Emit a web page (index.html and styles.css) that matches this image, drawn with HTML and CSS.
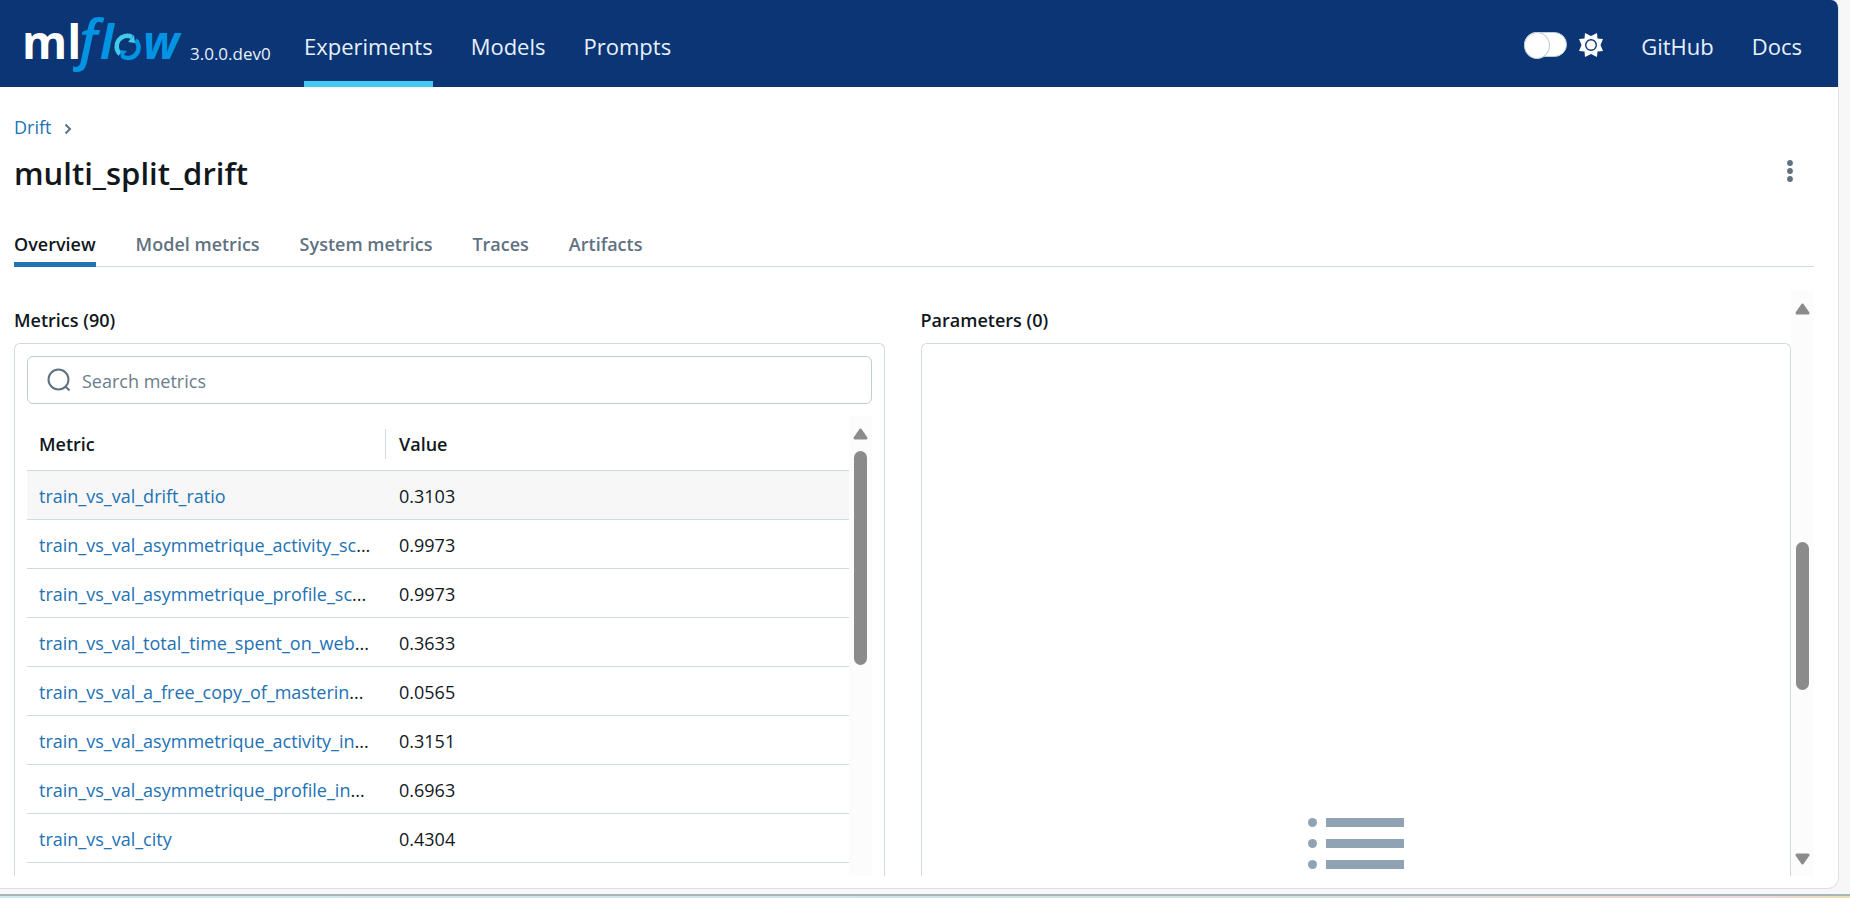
FILE: index.html
```html
<!DOCTYPE html>
<html lang="en">
<head>
<meta charset="utf-8">
<title>multi_split_drift - MLflow</title>
<link rel="stylesheet" href="styles.css">
</head>
<body>
<div class="window">
  <header class="topbar">
    <a class="brand" href="#" aria-label="MLflow home">
      <svg class="logo" viewBox="0 0 160 66" width="160" height="66">
        <text class="logo-ml" x="0" y="52">ml</text>
        <text class="logo-f" x="57" y="52">f</text>
        <text class="logo-l" x="78" y="52">l</text>
        <g fill="none" stroke-width="4.500">
          <path stroke="#43c9ed" d="M98 47 A10.500 10.500 0 0 1 110 30"/>
          <path stroke="#0194e2" d="M113.500 33 A10.500 10.500 0 0 1 100 49"/>
        </g>
        <path fill="#43c9ed" d="M106 35 L113 36 L112 28 Z"/>
        <path fill="#0194e2" d="M105 44 L98 43 L99 51 Z"/>
        <text class="logo-w" x="121" y="52">w</text>
      </svg>
      <span class="version">3.0.0.dev0</span>
    </a>
    <nav class="nav">
      <a class="nav-link active" href="#">Experiments</a>
      <a class="nav-link" href="#">Models</a>
      <a class="nav-link" href="#">Prompts</a>
    </nav>
    <div class="theme">
      <input class="switch" type="checkbox" role="switch" aria-label="Dark mode">
      <svg width="24" height="24" viewBox="0 0 24 24">
        <path fill="#fff" fill-rule="evenodd" d="M6 0 L12 3 L18 0 L18.500 5.500 L24 6 L21.500 12 L24 18 L18.500 18.500 L18 24 L12 21 L6 24 L5.500 18.500 L0 18 L2.500 12 L0 6 L5.500 5.500 Z M12 6 A6 6 0 1 0 12 18 A6 6 0 1 0 12 6 Z"/>
        <circle cx="12" cy="12" r="4.600" fill="#fff"/>
      </svg>
    </div>
    <nav class="nav">
      <a class="nav-link" href="#">GitHub</a>
      <a class="nav-link" href="#">Docs</a>
    </nav>
  </header>

  <main class="page">
    <nav class="crumbs">
      <a class="link" href="#">Drift</a>
      <svg width="8" height="12" viewBox="0 0 8 12"><path d="M1.500 1.500 L6 6 L1.500 10.500" fill="none" stroke="#5f7281" stroke-width="2"/></svg>
    </nav>
    <div class="title-row">
      <h1 class="title">multi_split_drift</h1>
      <button class="more" type="button" aria-label="More actions">
        <svg width="6" height="22" viewBox="0 0 6 22" fill="#5f7281"><circle cx="3" cy="3" r="2.900"/><circle cx="3" cy="11" r="2.900"/><circle cx="3" cy="19" r="2.900"/></svg>
      </button>
    </div>
    <div class="tabs" role="tablist">
      <button class="tab selected" role="tab" type="button">Overview</button>
      <button class="tab" role="tab" type="button">Model metrics</button>
      <button class="tab" role="tab" type="button">System metrics</button>
      <button class="tab" role="tab" type="button">Traces</button>
      <button class="tab" role="tab" type="button">Artifacts</button>
    </div>

    <div class="scroller">
      <div class="columns">
        <section class="column">
          <h2 class="heading">Metrics (90)</h2>
          <div class="card">
            <label class="search">
              <svg width="24" height="24" viewBox="0 0 24 24" fill="none" stroke="#5f7281" stroke-width="2"><circle cx="11.500" cy="11.500" r="10"/><path d="M18.500 18.500 L22.500 22.500"/></svg>
              <input class="search-input" type="text" placeholder="Search metrics" aria-label="Search metrics">
            </label>
            <div class="table-area">
              <table class="table">
                <thead>
                  <tr><th class="name"><span class="th-label">Metric</span></th><th>Value</th></tr>
                </thead>
                <tbody>
                  <tr class="hovered"><td class="name"><a class="link" href="#">train_vs_val_drift_ratio</a></td><td>0.3103</td></tr>
                  <tr><td class="name"><a class="link" href="#">train_vs_val_asymmetrique_activity_sc</a>...</td><td>0.9973</td></tr>
                  <tr><td class="name"><a class="link" href="#">train_vs_val_asymmetrique_profile_sc</a>...</td><td>0.9973</td></tr>
                  <tr><td class="name"><a class="link" href="#">train_vs_val_total_time_spent_on_web</a>...</td><td>0.3633</td></tr>
                  <tr><td class="name"><a class="link" href="#">train_vs_val_a_free_copy_of_masterin</a>...</td><td>0.0565</td></tr>
                  <tr><td class="name"><a class="link" href="#">train_vs_val_asymmetrique_activity_in</a>...</td><td>0.3151</td></tr>
                  <tr><td class="name"><a class="link" href="#">train_vs_val_asymmetrique_profile_in</a>...</td><td>0.6963</td></tr>
                  <tr><td class="name"><a class="link" href="#">train_vs_val_city</a></td><td>0.4304</td></tr>
                </tbody>
              </table>
              <div class="scrollbar table-bar">
                <svg class="arrow" width="15" height="12" viewBox="0 0 15 12"><path d="M7.500 2 L13 10 H2 Z"/></svg>
                <div class="thumb"></div>
              </div>
            </div>
          </div>
        </section>
        <section class="column">
          <h2 class="heading">Parameters (0)</h2>
          <div class="card empty">
            <svg width="96" height="51" viewBox="0 0 96 51" fill="#90a3b4">
              <ellipse cx="4.500" cy="4.500" rx="4.500" ry="4.500"/><rect x="18" width="78" height="9"/>
              <ellipse cx="4.500" cy="25.500" rx="4.500" ry="4.500"/><rect x="18" y="21" width="78" height="9"/>
              <ellipse cx="4.500" cy="46.500" rx="4.500" ry="4.500"/><rect x="18" y="42" width="78" height="9"/>
            </svg>
          </div>
        </section>
      </div>
      <div class="scrollbar page-bar">
        <svg class="arrow" width="15" height="12" viewBox="0 0 15 12"><path d="M7.500 2 L13 10 H2 Z"/></svg>
        <div class="thumb"></div>
        <svg class="arrow down" width="15" height="12" viewBox="0 0 15 12"><path d="M7.500 10 L13 2 H2 Z"/></svg>
      </div>
    </div>
  </main>
</div>
<div class="desktop-edge"></div>
</body>
</html>
```
FILE: styles.css
```css
* {
  box-sizing: border-box;
}

body {
  margin: 0;
  height: 100vh;
  display: flex;
  flex-direction: column;
  overflow: hidden;
  background: #f7f7f7;
  color: #11171c;
  font-family: "Open Sans", "Noto Sans", sans-serif;
  font-size: 18px;
  line-height: 24px;
}

button,
input {
  font: inherit;
}

.window {
  flex: 1;
  min-height: 0;
  display: flex;
  flex-direction: column;
  margin: 0 11px 5px 0;
  overflow: hidden;
  background: #fff;
  border-right: 1px solid #e3e3e3;
  border-bottom: 1px solid #dedede;
  border-radius: 0 8px 12px 0;
}

.topbar {
  flex: none;
  display: flex;
  align-items: stretch;
  height: 87px;
  padding: 0 36px 0 22px;
  background: #0b3574;
}

.brand {
  display: flex;
  align-items: flex-start;
  gap: 8px;
  width: 282px;
  padding-top: 7px;
  color: #e7f1fb;
  text-decoration: none;
}

.logo {
  flex: none;
  overflow: visible;
}

.version {
  padding-top: 35px;
  font-size: 17px;
}

.logo-ml {
  font-size: 46px;
  font-weight: 700;
  fill: #fff;
}

.logo-f {
  font-size: 55px;
  font-style: italic;
  font-weight: 600;
  fill: #0194e2;
}

.logo-l,
.logo-w {
  font-size: 46px;
  font-style: italic;
  font-weight: 700;
  fill: #0194e2;
}

.nav {
  display: flex;
  gap: 38px;
}

.nav-link {
  display: flex;
  align-items: center;
  padding-top: 10px;
  border-bottom: 6px solid transparent;
  color: #e7f1fb;
  font-size: 22px;
  line-height: 28px;
  text-decoration: none;
}

.nav-link.active {
  border-bottom-color: #43c9ed;
}

.theme {
  display: flex;
  align-items: center;
  gap: 12px;
  margin: 0 38px 0 auto;
}

.theme svg {
  margin-top: 3px;
}

.switch {
  appearance: none;
  width: 43px;
  height: 25px;
  margin: 2px 0 0;
  border: 1px solid #c0cdd8;
  border-radius: 13px;
  background: #fff;
}

.switch::before {
  content: "";
  display: block;
  width: 24px;
  height: 25px;
  margin: -1px;
  border: 1px solid #c0cdd8;
  border-radius: 50%;
  background: #fff;
}

.page {
  flex: 1;
  min-height: 0;
  display: flex;
  flex-direction: column;
  padding: 28px 24px 12px 14px;
}

.link {
  color: #2272b4;
  text-decoration: none;
}

.crumbs {
  display: flex;
  align-items: center;
  gap: 13px;
}

.crumbs svg {
  margin-top: 4px;
}

.title-row {
  display: flex;
  align-items: center;
  justify-content: space-between;
  padding: 12px 21px 0 0;
}

.title {
  margin: 0;
  font-size: 31px;
  font-weight: 600;
  line-height: 44px;
}

.more {
  display: flex;
  padding: 0 0 4px;
  border: 0;
  background: none;
}

.tabs {
  display: flex;
  gap: 40px;
  margin-top: 36px;
  border-bottom: 1px solid #d1d9e1;
}

.tab {
  margin-bottom: -1px;
  padding: 0 0 5px;
  border: 0;
  border-bottom: 5px solid transparent;
  background: none;
  color: #5f7281;
  font-weight: 600;
  line-height: 26px;
}

.tab.selected {
  border-bottom-color: #2272b4;
  color: #11171c;
}

.scroller {
  flex: 1;
  min-height: 0;
  display: flex;
  margin-top: 24px;
}

.columns {
  flex: 1;
  min-width: 0;
  display: grid;
  grid-template-columns: 1fr 1fr;
  gap: 36px;
}

.column {
  min-width: 0;
  display: flex;
  flex-direction: column;
  padding-top: 17px;
}

.heading {
  margin: 0 0 11px;
  font-size: 18px;
  font-weight: 600;
  line-height: 24px;
}

.card {
  flex: 1;
  min-height: 0;
  display: flex;
  flex-direction: column;
  padding: 12px 12px 0;
  border: 1px solid #d1d9e1;
  border-bottom: 0;
  border-radius: 6px 6px 0 0;
}

.empty {
  align-items: center;
  justify-content: flex-end;
  padding-bottom: 7px;
}

.search {
  flex: none;
  display: flex;
  align-items: center;
  gap: 11px;
  height: 48px;
  padding: 0 19px;
  border: 1px solid #c0cdd8;
  border-radius: 6px;
}

.search-input {
  flex: 1;
  padding: 2px 0 0;
  border: 0;
  outline: 0;
  background: none;
}

.search-input::placeholder {
  color: #6b7d8b;
  opacity: 1;
}

.table-area {
  flex: 1;
  min-height: 0;
  display: flex;
  align-items: stretch;
  margin-top: 12px;
}

.table {
  flex: 1;
  align-self: flex-start;
  border-collapse: separate;
  border-spacing: 0;
  table-layout: fixed;
}

.table th,
.table td {
  height: 49px;
  padding: 2px 12px 0;
  border-bottom: 1px solid #d1d9e1;
  text-align: left;
  white-space: nowrap;
}

.table th {
  height: 55px;
  font-weight: 600;
}

.table .name {
  width: 360px;
}

.table th.name {
  padding-right: 1px;
}

.th-label {
  display: block;
  border-right: 1px solid #d1d9e1;
  line-height: 30px;
}

.hovered {
  background: #f7f7f7;
}

.scrollbar {
  flex: none;
  display: flex;
  flex-direction: column;
  align-items: center;
  width: 23px;
  padding: 12px 0 11px;
  background: #fcfcfc;
}

.arrow {
  flex: none;
  fill: #8b8b8b;
  stroke: #8b8b8b;
  stroke-width: 3px;
  stroke-linejoin: round;
}

.down {
  margin-top: auto;
}

.thumb {
  width: 13px;
  border-radius: 7px;
  background: #8b8b8b;
}

.table-bar .thumb {
  height: 49%;
  margin-top: 11px;
}

.page-bar .thumb {
  height: 148px;
  margin-top: 227px;
}

.desktop-edge {
  flex: none;
  height: 4px;
  border-top: 2px solid #a9b5b8;
  background: linear-gradient(90deg, #cfe9f0, #cfe3e0 70%, #ecd8d4 88%, #ecd8e0 95%, #e8e0b0);
}
```
